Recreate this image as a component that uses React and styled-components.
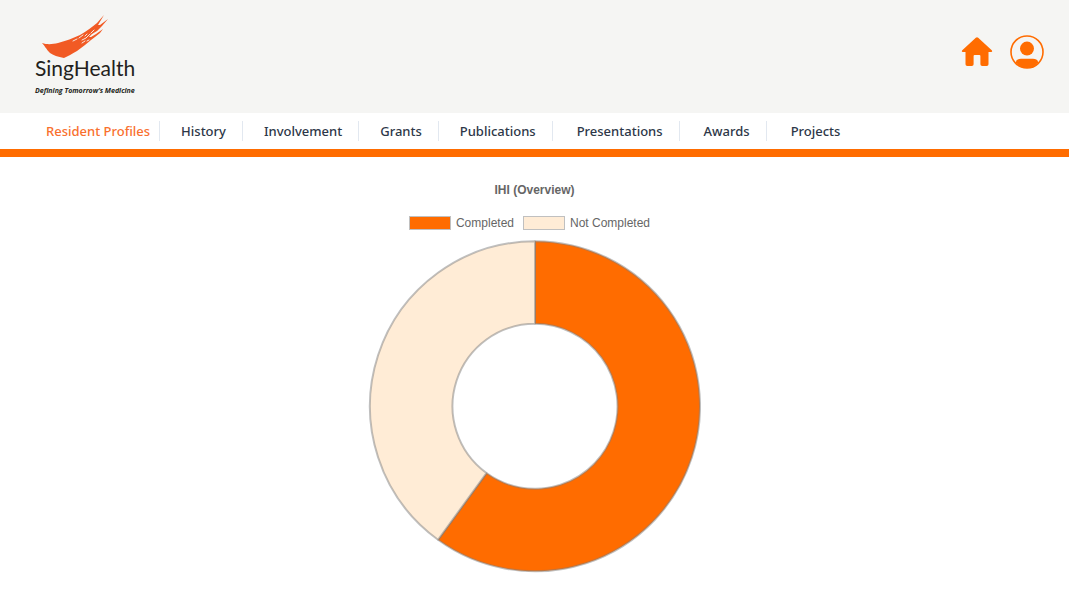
import React from "react";
import styled, { createGlobalStyle } from "styled-components";

const ORANGE = "#ff6c00";

const GlobalStyle = createGlobalStyle`
  *, *::before, *::after { box-sizing: border-box; }
  body {
    margin: 0;
    background: #fff;
    font-family: "Noto Sans", "Open Sans", sans-serif;
  }
`;

const Header = styled.header`
  display: flex;
  justify-content: space-between;
  align-items: flex-start;
  padding: 14px 24px 16px 35px;
  background: #f5f5f3;
`;

const Brand = styled.a`
  display: flex;
  flex-direction: column;
  align-items: flex-start;
  color: #231f20;
  text-decoration: none;
  white-space: nowrap;
`;

const Swoosh = styled.svg`
  display: block;
  width: 74px;
  height: 44px;
  margin-left: 5px;
`;

const BrandName = styled.span`
  font: 400 21px/20px Lato, "Open Sans", sans-serif;
`;

const Tagline = styled.span`
  margin-top: 7px;
  font: italic 700 7px/12px "Open Sans", sans-serif;
`;

const Actions = styled.div`
  display: flex;
  gap: 15px;
  padding-top: 20px;
`;

const IconButton = styled.button`
  display: flex;
  padding: 0;
  border: 0;
  background: none;
  color: ${ORANGE};
  cursor: pointer;
`;

const Nav = styled.nav`
  padding: 8px 25px;
  border-bottom: 8px solid ${ORANGE};
  background: #fff;
`;

const NavList = styled.ul`
  display: flex;
  margin: 0;
  padding: 0;
  list-style: none;
`;

const NavItem = styled.li`
  padding-left: ${({ $wide }) => ($wide ? 24 : 21)}px;
  padding-right: ${({ $active }) => ($active ? 9 : 16)}px;
  border-right: 1px solid #e2e8f0;

  &:last-child { border-right: 0; }
`;

const NavLink = styled.a`
  display: block;
  color: ${({ $active }) => ($active ? "#f9702e" : "#2d3748")};
  font-size: 13px;
  font-weight: 500;
  line-height: 20px;
  text-decoration: none;
  white-space: nowrap;
`;

const Main = styled.main`
  display: flex;
  flex-direction: column;
  align-items: center;
  padding: 25px 16px;
  color: #666;
  font: 12px/16px "Liberation Sans", Arial, sans-serif;
`;

const ChartTitle = styled.h1`
  margin: 0 0 17px;
  font-size: 12px;
  font-weight: 700;
  line-height: 16px;
`;

const Legend = styled.ul`
  display: flex;
  gap: 9px;
  margin: 0 10px 9px 0;
  padding: 0;
  list-style: none;
`;

const LegendItem = styled.li`
  display: flex;
  align-items: center;
  gap: 5px;
`;

const Swatch = styled.span`
  width: 42px;
  height: 14px;
  border: 1px solid #c0c0c0;
  background: ${({ $color }) => $color};
`;

const Doughnut = styled.svg`
  display: block;
  width: 333px;
  max-width: 100%;
`;

const links = [
  { label: "Resident Profiles", active: true },
  { label: "History" },
  { label: "Involvement" },
  { label: "Grants" },
  { label: "Publications" },
  { label: "Presentations", wide: true },
  { label: "Awards", wide: true },
  { label: "Projects", wide: true },
];

const series = [
  { label: "Completed", value: 60, color: ORANGE },
  { label: "Not Completed", value: 40, color: "#ffecd6" },
];

const point = (radius, share) => {
  const angle = share * 2 * Math.PI;
  return `${167 + radius * Math.sin(angle)} ${166.3 - radius * Math.cos(angle)}`;
};

const slice = (from, to) => {
  const large = to - from > 0.5 ? 1 : 0;
  return `M${point(165, from)} A165 165 0 ${large} 1 ${point(165, to)} L${point(82.5, to)} A82.5 82.5 0 ${large} 0 ${point(82.5, from)} Z`;
};

function DoughnutChart({ data }) {
  const total = data.reduce((sum, d) => sum + d.value, 0);
  let start = 0;
  return (
    <Doughnut viewBox="0 0 333 333" role="img" aria-label="IHI overview">
      {data.map((d) => {
        const end = start + d.value / total;
        const path = slice(start, end);
        start = end;
        return <path key={d.label} d={path} fill={d.color} stroke="#808080" strokeOpacity="0.5" strokeWidth="2" strokeLinejoin="bevel" />;
      })}
    </Doughnut>
  );
}

export default function App() {
  return (
    <>
      <GlobalStyle />
      <Header>
        <Brand href="#">
          <Swoosh viewBox="0 0 74 44" aria-hidden="true">
            <path
              fill="#f15a24"
              d="M2 29C8 31 13 30 18 29C26 27 33 24 40 21C47 17 52 13 57 9L64 1L58 11L60 11L68 5L62 12L57 17L52 20L49 23L51 23L56 20L63 15L60 19L55 23L51 26L45 31L37 37C32 40 28 42 24 44C18 43 13 41 10 39C6 35 5 32 2 29Z"
            />
            <path
              fill="none"
              stroke="#f5f5f3"
              strokeLinecap="round"
              strokeWidth="0.9"
              d="M33 27L37 25M39 24L43 21M42 26L46 24L50 20M42 29L45 27M51 19L54 16M47 27L49 26M45 22L47 20"
            />
          </Swoosh>
          <BrandName>SingHealth</BrandName>
          <Tagline>Defining Tomorrow’s Medicine</Tagline>
        </Brand>
        <Actions>
          <IconButton type="button" aria-label="Home">
            <svg width="34" height="36" viewBox="0 0 34 36" fill="currentColor">
              <path d="M15.8 3.8Q17 2.8 18.2 3.8L32 16.4Q32.8 18 31 18H28.5V30.2Q28.5 32 26.7 32H22.2Q20.4 32 20.4 30.2V22Q20.4 21 19.4 21H14.6Q13.6 21 13.6 22V30.2Q13.6 32 11.8 32H7.3Q5.5 32 5.5 30.2V18H3Q1.2 18 2 16.4Z" />
            </svg>
          </IconButton>
          <IconButton type="button" aria-label="Account">
            <svg width="36" height="36" viewBox="0 0 36 36" fill="currentColor">
              <circle cx="18" cy="18" r="16" fill="none" stroke="currentColor" strokeWidth="1.6" />
              <circle cx="18" cy="14.6" r="7" />
              <path d="M7 28.5V27.5Q8 24.8 12 24.8H24Q28 24.8 29 27.5V28.5Q25 34 18 34T7 28.5Z" />
            </svg>
          </IconButton>
        </Actions>
      </Header>
      <Nav aria-label="Sections">
        <NavList>
          {links.map(({ label, active, wide }) => (
            <NavItem key={label} $active={active} $wide={wide}>
              <NavLink href="#" $active={active} aria-current={active ? "page" : undefined}>
                {label}
              </NavLink>
            </NavItem>
          ))}
        </NavList>
      </Nav>
      <Main>
        <ChartTitle>IHI (Overview)</ChartTitle>
        <Legend>
          {series.map((d) => (
            <LegendItem key={d.label}>
              <Swatch $color={d.color} />
              {d.label}
            </LegendItem>
          ))}
        </Legend>
        <DoughnutChart data={series} />
      </Main>
    </>
  );
}
